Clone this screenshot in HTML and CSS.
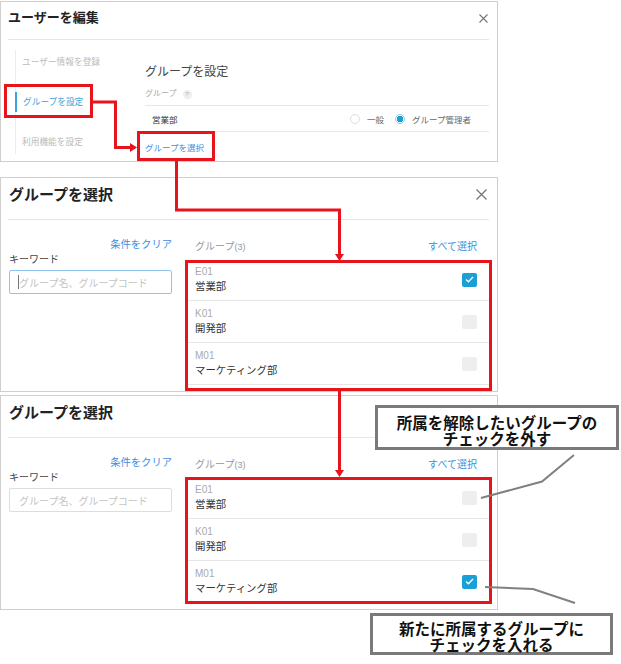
FILE: index.html
```html
<!DOCTYPE html>
<html lang="ja">
<head>
  <meta charset="UTF-8" />
  <meta name="viewport" content="width=device-width, initial-scale=1.0"/>
  <title>グループを選択</title>
  <link rel="stylesheet" href="styles.css">
</head>
<body>
<div class="page">

  <!-- ユーザー編集 -->
  <section class="modal modal-edit">
    <div class="head">
      <h1>ユーザーを編集</h1>
      <svg class="close" width="9" height="9" viewBox="0 0 9 9"><path d="M0.5 0.5L8.5 8.5M8.5 0.5L0.5 8.5" stroke="#777" stroke-width="1.1"/></svg>
    </div>
    <div class="edit-body">
      <ul class="steps">
        <li>ユーザー情報を登録</li>
        <li class="active">グループを設定</li>
        <li>利用機能を設定</li>
      </ul>
      <div class="group-setting">
        <h2>グループを設定</h2>
        <div class="field-label">グループ <span class="help">?</span></div>
        <div class="group-row">
          <span class="group-name">営業部</span>
          <div class="roles">
            <span class="radio"></span><span>一般</span>
            <span class="radio checked"></span><span>グループ管理者</span>
          </div>
        </div>
        <a class="select-link" href="#">グループを選択</a>
      </div>
    </div>
  </section>

  <!-- グループを選択 (変更前) -->
  <section class="modal modal-select first">
    <div class="head head-lg">
      <h1>グループを選択</h1>
      <svg class="close" width="11" height="11" viewBox="0 0 11 11"><path d="M0.5 0.5L10.5 10.5M10.5 0.5L0.5 10.5" stroke="#777" stroke-width="1.3"/></svg>
    </div>
    <div class="select-body">
      <div class="filter">
        <a class="clear" href="#">条件をクリア</a>
        <div class="filter-label">キーワード</div>
        <div class="keyword focus"><span class="caret"></span>グループ名、グループコード</div>
      </div>
      <div class="groups">
        <div class="groups-head">
          <span class="count">グループ<small>(3)</small></span>
          <a href="#">すべて選択</a>
        </div>
        <div class="group-item">
          <div><div class="code">E01</div><div class="name">営業部</div></div>
          <span class="check on"><svg width="9" height="7" viewBox="0 0 9 7"><path d="M1 3.6L3.4 5.8L8 1" fill="none" stroke="#fff" stroke-width="1.3"/></svg></span>
        </div>
        <div class="group-item">
          <div><div class="code">K01</div><div class="name">開発部</div></div>
          <span class="check"></span>
        </div>
        <div class="group-item">
          <div><div class="code">M01</div><div class="name">マーケティング部</div></div>
          <span class="check"></span>
        </div>
      </div>
    </div>
  </section>

  <!-- グループを選択 (変更後) -->
  <section class="modal modal-select second">
    <div class="head head-lg">
      <h1>グループを選択</h1>
    </div>
    <div class="select-body">
      <div class="filter">
        <a class="clear" href="#">条件をクリア</a>
        <div class="filter-label">キーワード</div>
        <div class="keyword">グループ名、グループコード</div>
      </div>
      <div class="groups">
        <div class="groups-head">
          <span class="count">グループ<small>(3)</small></span>
          <a href="#">すべて選択</a>
        </div>
        <div class="group-item">
          <div><div class="code">E01</div><div class="name">営業部</div></div>
          <span class="check"></span>
        </div>
        <div class="group-item">
          <div><div class="code">K01</div><div class="name">開発部</div></div>
          <span class="check"></span>
        </div>
        <div class="group-item">
          <div><div class="code">M01</div><div class="name">マーケティング部</div></div>
          <span class="check on"><svg width="9" height="7" viewBox="0 0 9 7"><path d="M1 3.6L3.4 5.8L8 1" fill="none" stroke="#fff" stroke-width="1.3"/></svg></span>
        </div>
      </div>
    </div>
  </section>

  <!-- 注釈 -->
  <svg class="marks" width="621" height="664" viewBox="0 0 621 664">
    <g fill="none" stroke="#e8141b" stroke-width="3">
      <rect x="5.5" y="85.5" width="86" height="31"/>
      <rect x="138.5" y="132.5" width="75" height="27"/>
      <rect x="186.5" y="261.5" width="304" height="128"/>
      <rect x="186.5" y="478.5" width="304" height="124"/>
      <polyline points="93,102 115.5,102 115.5,147.5 131,147.5"/>
      <polyline points="176.5,161 176.5,210 339.5,210 339.5,255"/>
      <polyline points="339.5,391 339.5,471"/>
    </g>
    <g fill="#e8141b">
      <polygon points="130,143 137,147.5 130,152"/>
      <polygon points="335,254 344,254 339.5,261"/>
      <polygon points="335,470 344,470 339.5,477"/>
    </g>
    <g fill="none" stroke="#808080" stroke-width="2">
      <polyline points="574,455 542,481.5 481,498"/>
      <polyline points="485,587 533,589 575,603"/>
    </g>
  </svg>
  <div class="callout callout-remove">所属を解除したいグループの<br>チェックを外す</div>
  <div class="callout callout-add">新たに所属するグループに<br>チェックを入れる</div>

</div>
</body>
</html>
```

FILE: styles.css
```css
* {
  box-sizing: border-box;
}
body {
  margin: 0;
  background-color: #fff;
  font-family: "Liberation Sans", "Noto Sans CJK JP", sans-serif;
  color: #333;
}
a {
  text-decoration: none;
  color: #3b8fe0;
}
.page {
  position: relative;
  width: 621px;
  height: 664px;
  overflow: hidden;
}
.modal {
  width: 498px;
  border: 1px solid #cfcfcf;
  padding: 0 8px 0 7px;
  background-color: #fff;
}
.modal-edit {
  margin-top: 1px;
  height: 161px;
}
.modal-select.first {
  margin-top: 15px;
  height: 215px;
}
.modal-select.second {
  margin-top: 3px;
  height: 215px;
}
.head {
  height: 38px;
  padding-top: 5px;
  border-bottom: 1px solid #e6e6e6;
  display: flex;
  justify-content: space-between;
  align-items: flex-start;
}
.head h1 {
  margin: 0;
  font-size: 13px;
  line-height: 22px;
  color: #222;
}
.head .close {
  margin: 7px 1px 0 0;
}
.head-lg {
  height: 42px;
  padding-top: 6px;
}
.head-lg h1 {
  margin-left: 1px;
  font-size: 15px;
}
.head-lg .close {
  margin: 5px 2px 0 0;
}

/* ユーザー編集 */
.edit-body {
  display: flex;
}
.steps {
  list-style: none;
  margin: 10px 0 0 7px;
  padding: 2px 0 0;
  width: 130px;
  border-left: 1px solid #ececec;
}
.steps li {
  font-size: 8.7px;
  line-height: 20px;
  color: #bbb;
  padding-left: 6px;
  margin-bottom: 20px;
}
.steps li:last-child {
  margin-bottom: 0;
}
.steps li.active {
  color: #3aa6d8;
  margin-left: -1px;
  padding-left: 6px;
  border-left: 2px solid #3aa6d8;
}
.group-setting {
  flex: 1;
}
.group-setting h2 {
  margin: 24px 0 0;
  font-size: 12px;
  line-height: 16px;
  font-weight: normal;
  color: #444;
}
.field-label {
  margin-top: 8px;
  font-size: 8px;
  line-height: 12px;
  color: #aaa;
  display: flex;
  align-items: center;
}
.help {
  margin-left: 6px;
  width: 9px;
  height: 9px;
  border-radius: 50%;
  background-color: #eee;
  color: #aaa;
  font-size: 6px;
  line-height: 9px;
  text-align: center;
}
.group-row {
  margin-top: 5px;
  height: 27px;
  border-top: 1px solid #e8e8e8;
  border-bottom: 1px solid #e8e8e8;
  display: flex;
  justify-content: space-between;
  align-items: center;
  padding: 0 18px 0 7px;
  font-size: 8.5px;
}
.roles {
  display: flex;
  align-items: center;
  color: #666;
}
.radio {
  width: 10px;
  height: 10px;
  border-radius: 50%;
  border: 1px solid #ddd;
  margin-right: 7px;
}
.radio + span {
  margin-right: 11px;
}
.roles span:last-child {
  margin-right: 0;
}
.radio.checked {
  border-color: #8fd0ea;
  background: radial-gradient(circle, #1a9fd6 0 3px, #fff 3.5px);
}
.select-link {
  display: block;
  margin-top: 10px;
  font-size: 8.5px;
  line-height: 12px;
}

/* グループを選択 */
.select-body {
  display: flex;
  gap: 16px;
}
.filter {
  width: 164px;
  padding-left: 1px;
}
.clear {
  display: block;
  margin-top: 18px;
  text-align: right;
  font-size: 10.3px;
  line-height: 14px;
}
.filter-label {
  margin-top: 1px;
  font-size: 10px;
  line-height: 14px;
  color: #444;
}
.keyword {
  margin-top: 3px;
  height: 24px;
  border: 1px solid #ddd;
  border-radius: 2px;
  padding-left: 9px;
  display: flex;
  align-items: center;
  font-size: 10px;
  color: #c4c4c4;
}
.keyword.focus {
  border-color: #90c6ee;
}
.caret {
  width: 1px;
  height: 14px;
  margin-left: -1px;
  background-color: #777;
}
.groups {
  flex: 1;
  margin-right: -1px;
}
.groups-head {
  margin-top: 20px;
  display: flex;
  justify-content: space-between;
  padding: 0 13px 0 7px;
  font-size: 10px;
  line-height: 14px;
}
.count {
  color: #999;
}
.count small {
  font-size: 9px;
}
.group-item {
  height: 42px;
  margin-top: 5px;
  padding: 6px 13px 0 7px;
  border-bottom: 1px solid #e6e6e6;
  display: flex;
  justify-content: space-between;
  align-items: center;
}
.group-item + .group-item {
  margin-top: 0;
}
.group-item > div {
  align-self: flex-start;
}
.code {
  font-size: 10px;
  line-height: 14px;
  color: #aaa;
}
.name {
  font-size: 10.4px;
  line-height: 16px;
  color: #333;
}
.check {
  width: 15px;
  height: 14px;
  border-radius: 2px;
  background-color: #eee;
  display: flex;
  align-items: center;
  justify-content: center;
  margin-top: -6px;
}
.check.on {
  background-color: #1a9fd6;
}

/* 注釈 */
.marks {
  position: absolute;
  left: 0;
  top: 0;
  pointer-events: none;
}
.callout {
  position: absolute;
  border: 3px solid #7a7a7a;
  background-color: #fff;
  text-align: center;
  font-family: "Noto Sans CJK JP", sans-serif;
  font-weight: 700;
  font-size: 15.5px;
  line-height: 16px;
  color: #111;
}
.callout-remove {
  left: 375px;
  top: 405px;
  width: 244px;
  height: 45px;
  padding-top: 6px;
}
.callout-add {
  left: 370px;
  top: 613px;
  width: 243px;
  height: 42px;
  padding-top: 4px;
}
```
